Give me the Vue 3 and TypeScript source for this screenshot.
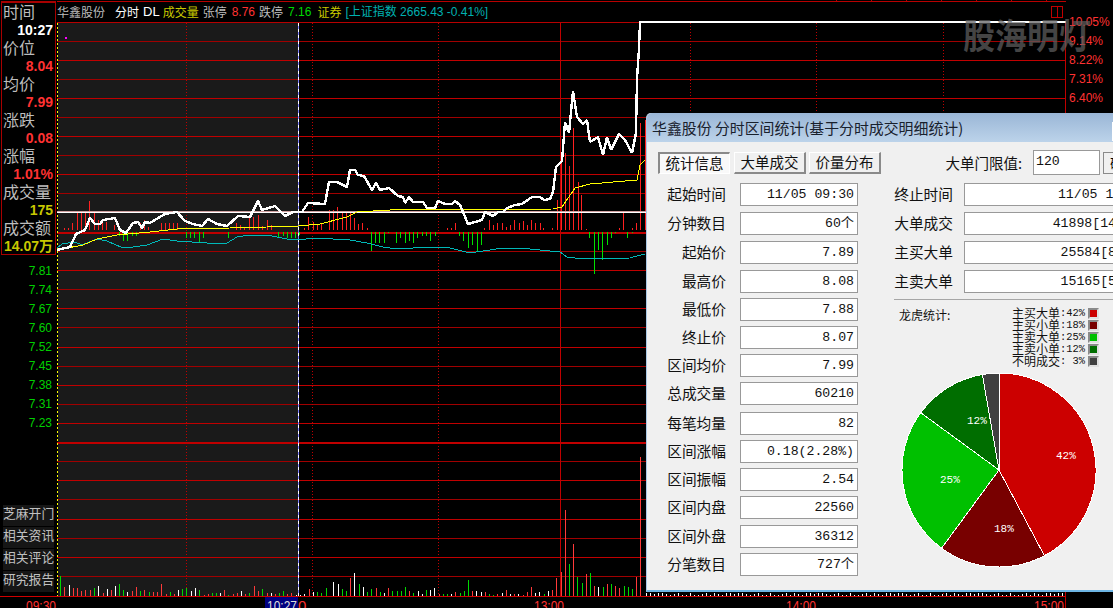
<script setup lang="ts">
type Pt = [number, number]

function parsePairs(s: string): Pt[] {
  return s.trim().split(/\s+/).map((p) => {
    const [a, b] = p.split(',').map(Number)
    return [a, b] as Pt
  })
}
function line(s: string): string {
  return parsePairs(s).map((p) => p.join(',')).join(' ')
}
function bars(s: string, base: number): string {
  return parsePairs(s).map(([x, y]) => `M${x + 0.5} ${base}V${y}`).join('')
}

const pricePts = line(`57,250 70,247 76,234 85,230 90,218 95,224 100,224 103,220 115,218 120,230 126,233 133,223 138,222 142,228 145,222 150,223 160,217 165,214 177,212 185,221 193,224 202,226 208,219 217,224 227,226 238,216 250,217 258,201 262,210 275,206 285,216 293,212 302,212 308,203 325,204 329,182 337,182 347,187 350,170 355,170 358,175 364,176 372,190 376,183 380,190 389,188 398,196 403,197 405,203 409,197 413,202 423,202 427,208 435,208 438,201 445,204 452,204 455,201 460,205 468,224 482,220 485,212 493,216 498,212 503,212 507,208 515,205 522,204 532,197 540,197 544,200 550,199 553,192 556,167 562,161 565,122 569,133 573,91 577,117 583,124 587,120 590,142 598,137 603,155 607,137 611,150 619,134 625,140 632,153 636,133 637,78 639,49 640,22 1066,22`)
const avgPts = line(`57,250 83,245 97,239 117,235 150,232 177,229 230,228 267,227 298,226 320,224 347,217 357,212 390,210 553,209 562,207 575,188 590,184 637,180 640,165 645,160`)
const idxPts = line(`57,248 62,244 75,242 82,245 97,239 107,241 123,248 133,247 147,245 163,239 177,241 207,243 227,243 237,237 250,235 267,235 287,239 298,240 315,238 333,239 350,240 367,243 383,247 397,249 430,247 450,248 470,253 483,251 503,248 530,249 560,252 567,257 583,259 630,258 637,256 645,254`)

const redUp = bars(`64,228 68,228 72,223 77,213 81,212 85,211 89,201 94,212 98,220 102,220 106,222 114,225 140,223 144,220 148,227 161,223 165,223 169,223 173,223 177,223 236,223 240,225 244,228 249,218 253,217 258,215 262,226 267,220 271,225 304,228 308,217 313,222 317,224 321,224 329,210 333,210 337,207 342,211 346,212 350,211 354,218 358,224 362,223 367,228 447,228 451,228 455,223 484,228 489,220 493,225 497,223 502,223 506,227 510,225 514,220 519,223 523,221 527,225 531,220 535,223 540,223 543,228 552,228 557,200 561,163 565,153 569,166 573,128 578,182 581,195 586,229 619,228 623,213 632,228 636,223 640,123 645,120`, 230)
const greenDown = bars(`119,236 123,241 127,241 132,236 136,236 186,238 190,238 194,238 199,243 203,238 228,238 278,238 283,236 287,238 291,238 295,238 299,235 371,251 375,243 379,243 384,243 388,233 396,243 400,238 405,243 409,241 413,243 417,238 422,236 426,236 430,241 435,236 459,236 463,241 468,248 472,245 477,251 481,245 589,238 594,274 598,250 602,260 607,245 611,238 615,233 627,238 632,233`, 232)

const volA = `181g288 193r321 208w315 220r324 232r324 244r333 256r330 270r330 283g324 295w318 308r339 320w327 334r330 346w318 358g312 370g330 382w336 395r333 409r321 421g333 433r330 446g336 460r336 472r336 484r312 497r342 511g336 523r342 535w330 547g327 559g324 574w333 586w324 598g330 611r345 623r343 637g339 649g339 661w339 673r330 685g345 699r342 711r339 724w333 736r342 748g339 762r318 775r333 787g327 800r339 812w339 825r343 838g339 850g333 862r342 874r339 888w345 900w345 913w342 926r327 938w336 952g336 964g339 977g324`
const volB = `10w306 25w312 37g327 49g333 61r294 73w279 88g312 100w321 112g336 124g327 139r324 151g336 163w339 175r324 187g333 202g333 214g333 226g321 238r333 250g339 265w333 277w342 289g330 301w330 313w324 328r342 340g342 352g342 364w342 376r336 391g339 403g333 415g300 427r333 439w333 454w336 466r336 478g342 490g345 502r342 517w339 529r330 541w342 553r342 565w342 579r345 592r336 604r321 616w339 628w336 643g342 655w333 667r330 679r294 694r276 706r90 718g252 730r192 742g291 757g309 769r282 781g279 793r318 805w321 820g321 832r312 844g312 856r318 868r324 883g318 895g321 907g327 919r291`

function volPath(color: string): string {
  let d = ''
  const add = (s: string, off: number) => {
    for (const t of s.split(' ')) {
      const m = t.match(/(\d+)([rgw])(\d+)/)
      if (m && m[2] === color) {
        const x = Math.round(off + Number(m[1]) / 3) + 0.5
        d += `M${x} 596V${480 + Math.round(Number(m[3]) / 3)}`
      }
    }
  }
  add(volA, 0)
  add(volB, 330)
  return d
}
const volRed = volPath('r') + 'M640.5 596V457'
const volGreen = volPath('g')
const volWhite = volPath('w')

const tickHeights = [3, 3, 2, 3, 3, 2, 1, 2, 3, 1, 1, 3, 1, 1, 2, 3, 1, 3, 2, 1]
const ticks = Array.from({ length: 105 }, (_, i) => {
  const x = 646 + i * 4 + 0.5
  return `M${x} 596V${596 - tickHeights[i % tickHeights.length]}`
}).join('')

const gridDim = [41, 79, 117, 155, 193, 251, 289, 327, 366, 404, 461, 499, 538, 576]
const gridBright = [60, 98, 136, 174, 270, 308, 347, 385, 423, 480, 519, 557]
const dotted = [186, 312, 438, 690, 816, 943]
const timeLabels = [
  { t: '09:30', x: 26 },
  { t: '13:00', x: 534 },
  { t: '14:00', x: 786 },
  { t: '15:00', x: 1034 },
]

const sideRows = [
  { label: '时间', value: '10:27', cls: 'white' },
  { label: '价位', value: '8.04', cls: 'red' },
  { label: '均价', value: '7.99', cls: 'red' },
  { label: '涨跌', value: '0.08', cls: 'red' },
  { label: '涨幅', value: '1.01%', cls: 'red' },
  { label: '成交量', value: '175', cls: 'yellow' },
  { label: '成交额', value: '14.07万', cls: 'yellow' },
]
const lowPrices = ['7.81', '7.74', '7.67', '7.60', '7.52', '7.45', '7.38', '7.31', '7.23']
const links = ['芝麻开门', '相关资讯', '相关评论', '研究报告']
const pcts = ['10.05%', '9.14%', '8.22%', '7.31%', '6.40%']

const leftStats = [
  { k: '起始时间', v: '11/05 09:30', gap: 0 },
  { k: '分钟数目', v: '60个', gap: 6 },
  { k: '起始价', v: '7.89', gap: 6 },
  { k: '最高价', v: '8.08', gap: 6 },
  { k: '最低价', v: '7.88', gap: 5 },
  { k: '终止价', v: '8.07', gap: 5 },
  { k: '区间均价', v: '7.99', gap: 5 },
  { k: '总成交量', v: '60210', gap: 5 },
  { k: '每笔均量', v: '82', gap: 7 },
  { k: '区间涨幅', v: '0.18(2.28%)', gap: 5 },
  { k: '区间振幅', v: '2.54', gap: 5 },
  { k: '区间内盘', v: '22560', gap: 5 },
  { k: '区间外盘', v: '36312', gap: 6 },
  { k: '分笔数目', v: '727个', gap: 5 },
]
const rightStats = [
  { k: '终止时间', v: '11/05 10:30' },
  { k: '大单成交', v: '41898[141笔]' },
  { k: '主买大单', v: '25584[87笔]' },
  { k: '主卖大单', v: '15165[54笔]' },
]
const legend = [
  { k: '主买大单', v: ':42%', c: '#cc0000' },
  { k: '主买小单', v: ':18%', c: '#780000' },
  { k: '主卖大单', v: ':25%', c: '#00c000' },
  { k: '主卖小单', v: ':12%', c: '#006e00' },
  { k: '不明成交', v: ': 3%', c: '#404040' },
]

const R = 97
const slices = [
  { from: 0, to: 152.1, c: '#cc0000' },
  { from: 152.1, to: 216.3, c: '#780000' },
  { from: 216.3, to: 306.2, c: '#00c000' },
  { from: 306.2, to: 350.1, c: '#006e00' },
  { from: 350.1, to: 360, c: '#404040' },
].map((s) => {
  const p = (a: number) => {
    const r = (a * Math.PI) / 180
    return `${(100 + R * Math.sin(r)).toFixed(2)} ${(100 - R * Math.cos(r)).toFixed(2)}`
  }
  const large = s.to - s.from > 180 ? 1 : 0
  return { d: `M100 100L${p(s.from)}A${R} ${R} 0 ${large} 1 ${p(s.to)}Z`, c: s.c }
})
const pieLabels = [
  { t: '42%', x: 157, y: 89 },
  { t: '18%', x: 95, y: 162 },
  { t: '25%', x: 41, y: 113 },
  { t: '12%', x: 68, y: 54 },
]
</script>

<template>
  <div class="screen">
    <aside class="side">
      <div class="side-box">
        <template v-for="r in sideRows" :key="r.label">
          <div class="side-label">{{ r.label }}</div>
          <div class="side-value" :class="r.cls">{{ r.value }}</div>
        </template>
      </div>
      <div class="low-prices">
        <div v-for="p in lowPrices" :key="p" class="low-price">{{ p }}</div>
      </div>
      <div class="links">
        <div v-for="l in links" :key="l" class="link">{{ l }}</div>
      </div>
      <div class="side-rule"></div>
    </aside>

    <main class="chart-col">
      <div class="top-ticks"></div>
      <header class="head">
        <span class="h-name">华鑫股份</span>
        <span class="h-white">分时</span>
        <span class="h-dl">DL</span>
        <span class="h-yellow">成交量</span>
        <span class="h-gray">张停</span>
        <span class="h-red">8.76</span>
        <span class="h-gray">跌停</span>
        <span class="h-green">7.16</span>
        <span class="h-yellow h-sec">证券</span>
        <span class="h-cyan">[上证指数 2665.43 -0.41%]</span>
        <span class="h-box"></span>
      </header>
      <svg class="chart" width="1010" height="586" viewBox="57 22 1010 586">
        <rect x="58" y="23" width="240" height="573" fill="#1a1a1a" />
        <g shape-rendering="crispEdges">
          <path v-for="y in gridDim" :key="y" :d="`M57 ${y + 0.5}H1066`" stroke="#a00000" fill="none" />
          <path v-for="y in gridBright" :key="y" :d="`M57 ${y + 0.5}H1066`" stroke="#c00000" fill="none" />
          <path d="M57 443H1066" stroke="#c00000" stroke-width="2" fill="none" />
          <path d="M57 233H1066" stroke="#c00000" stroke-width="2" fill="none" />
          <path d="M57 22.5H1066" stroke="#b80000" fill="none" />
          <path d="M57 596.5H1066" stroke="#d00000" fill="none" />
          <path v-for="x in dotted" :key="x" :d="`M${x + 0.5} 23V596`" stroke="#c00000" stroke-dasharray="1 2" fill="none" />
          <path d="M560.5 23V596M1065.5 22V608" stroke="#c00000" fill="none" />
          <path d="M57.5 23V596" stroke="#ffff00" stroke-dasharray="2 2" fill="none" />
          <path d="M298.5 23V596" stroke="#ffffff" fill="none" stroke-dasharray="3 3" />
          <path d="M298.5 26V596" stroke="#7d7dff" fill="none" stroke-dasharray="3 3" />
          <rect x="65" y="37" width="2" height="2" fill="#ff00ff" />
          <path :d="redUp" stroke="#ff2020" fill="none" />
          <path :d="greenDown" stroke="#00e000" fill="none" />
          <path :d="volRed" stroke="#ff3a3a" fill="none" />
          <path :d="volGreen" stroke="#00d800" fill="none" />
          <path :d="volWhite" stroke="#ffffff" fill="none" />
          <path :d="ticks" stroke="#ffffff" fill="none" />
          <path d="M57 212H1066" stroke="#d0a0a0" stroke-width="2" fill="none" />
          <path d="M57 212.5H1066" stroke="#ffffff" stroke-width="1" fill="none" />
          <polyline :points="idxPts" fill="none" stroke="#00b8b8" stroke-width="1" />
          <polyline :points="avgPts" fill="none" stroke="#ffff00" stroke-width="1" />
          <polyline :points="pricePts" fill="none" stroke="#ffffff" stroke-width="2.4" stroke-linejoin="bevel" />
        </g>
        <g class="time-labels">
          <text x="298" y="611">0</text>
          <rect x="265" y="597" width="33" height="11" fill="#000080" />
          <text v-for="l in timeLabels" :key="l.t" :x="l.x" y="611" textLength="30" lengthAdjust="spacingAndGlyphs">{{ l.t }}</text>
          <text x="267" y="611" class="cur" textLength="30" lengthAdjust="spacingAndGlyphs">10:27</text>
        </g>
      </svg>
    </main>

    <aside class="pct-col">
      <div v-for="p in pcts" :key="p" class="pct">{{ p }}</div>
    </aside>

    <div class="watermark">股海明灯</div>

    <section class="dialog">
      <div class="title">华鑫股份 分时区间统计(基于分时成交明细统计)</div>
      <div class="close"></div>
      <div class="toolbar">
        <button class="tab pressed">统计信息</button>
        <button class="tab">大单成交</button>
        <button class="tab">价量分布</button>
        <span class="limit-label">大单门限值:</span>
        <span class="limit-input">120</span>
        <button class="limit-btn">确定</button>
      </div>
      <div class="columns">
        <div class="col-left">
          <div v-for="s in leftStats" :key="s.k" class="row" :style="{ marginTop: s.gap + 'px' }">
            <span class="row-label">{{ s.k }}</span>
            <span class="row-value">{{ s.v }}</span>
          </div>
        </div>
        <div class="col-right">
          <div v-for="s in rightStats" :key="s.k" class="row r-row">
            <span class="row-label r-label">{{ s.k }}</span>
            <span class="row-value r-value">{{ s.v }}</span>
          </div>
          <div class="divider"></div>
          <div class="pie-panel">
            <div class="pie-head">
              <span class="pie-title">龙虎统计:</span>
              <div class="legend">
                <div v-for="l in legend" :key="l.k" class="legend-row">
                  <span class="legend-k">{{ l.k }}</span>
                  <span class="legend-v">{{ l.v }}</span>
                  <i class="swatch" :style="{ background: l.c }"></i>
                </div>
              </div>
            </div>
            <svg class="pie" width="200" height="200" viewBox="0 0 200 200">
              <path v-for="s in slices" :key="s.c" :d="s.d" :fill="s.c" stroke="#ffffff" stroke-width="1" shape-rendering="crispEdges" />
              <text v-for="t in pieLabels" :key="t.t" :x="t.x" :y="t.y" class="pie-text">{{ t.t }}</text>
            </svg>
          </div>
        </div>
      </div>
    </section>
  </div>
</template>

<style>
html, body { margin: 0; background: #000; }
</style>

<style scoped>
.screen {
  position: relative;
  display: flex;
  width: 1113px;
  height: 608px;
  overflow: hidden;
  background: #000;
  font-family: "Noto Sans CJK SC", "Liberation Sans", sans-serif;
}
.side {
  width: 57px;
  flex: none;
  display: flex;
  flex-direction: column;
  box-sizing: border-box;
  padding-top: 1px;
}
.side-box {
  margin-left: 1px;
  width: 55px;
  height: 254px;
  box-sizing: border-box;
  border: 1px solid #a80000;
  border-top-width: 2px;
}
.side-label {
  height: 18px;
  line-height: 16px;
  padding-left: 1px;
  font-size: 16px;
  color: #bdbdbd;
  white-space: nowrap;
}
.side-value {
  height: 18px;
  line-height: 18px;
  padding-right: 2px;
  text-align: right;
  font: bold 14px/18px "Liberation Sans", "Noto Sans CJK SC", sans-serif;
  white-space: nowrap;
}
.white { color: #fff; }
.red { color: #ff3232; }
.yellow { color: #c8c800; }
.low-prices { margin-top: 7px; }
.low-price {
  height: 19px;
  line-height: 19px;
  text-align: right;
  padding-right: 5px;
  font: 12px/19px "Liberation Sans", sans-serif;
  color: #00d000;
}
.links {
  margin-top: auto;
  margin-left: 3px;
  width: 51px;
  display: flex;
  flex-direction: column;
  gap: 1px;
}
.link {
  height: 21px;
  line-height: 16px;
  background: #161616;
  color: #c0c0c0;
  font-size: 12.8px;
  white-space: nowrap;
}
.side-rule {
  height: 1px;
  margin-top: 4px;
  margin-bottom: 11px;
  background: #d00000;
}
.chart-col {
  width: 1009px;
  flex: none;
  display: flex;
  flex-direction: column;
}
.top-ticks {
  height: 1px;
  flex: none;
  margin-left: 779px;
  background: repeating-linear-gradient(to right, #b00000 0 1px, transparent 1px 35px);
}
.head {
  height: 21px;
  flex: none;
  border-top: 1px solid #b80000;
  box-sizing: border-box;
  display: flex;
  align-items: center;
  font-size: 12px;
  white-space: nowrap;
  color: #bdbdbd;
}
.head span { line-height: 20px; }
.h-name { color: #bdbdbd; }
.h-white { color: #fff; margin-left: 10px; }
.h-dl { color: #fff; margin-left: 4px; font: 13px "Liberation Sans", sans-serif; }
.h-yellow { color: #c8c800; margin-left: 3px; }
.h-gray { margin-left: 4px; }
.h-red { color: #ff3232; margin-left: 5px; font: 12px "Liberation Sans", sans-serif; }
.h-green { color: #00d800; margin-left: 5px; font: 12px "Liberation Sans", sans-serif; }
.h-sec { margin-left: 6px; }
.h-cyan { color: #00b0b0; margin-left: 4px; font: 12px "Liberation Sans", "Noto Sans CJK SC", sans-serif; }
.head .h-box {
  margin-left: auto;
  margin-right: 3px;
  width: 10px;
  height: 10px;
  border: 1px solid #c00000;
  background: linear-gradient(#c00000, #c00000) center / 1px 100% no-repeat;
  flex: none;
}
.chart { display: block; flex: none; overflow: visible; }
.time-labels text {
  font: 15px "Liberation Sans", sans-serif;
  fill: #ff3232;
}
.time-labels .cur { fill: #dcdcdc; }
.pct-col {
  flex: 1;
  padding-top: 13px;
}
.pct {
  height: 19px;
  line-height: 19px;
  padding-left: 3px;
  font: 12px/19px "Liberation Sans", sans-serif;
  color: #ff3232;
}
.watermark {
  position: absolute;
  left: 963px;
  top: 11px;
  font-size: 32px;
  line-height: 46px;
  font-weight: 700;
  color: rgba(95, 95, 95, 0.72);
  white-space: nowrap;
  transform: scaleY(1.1);
}
.dialog {
  position: absolute;
  left: 646px;
  top: 113px;
  width: 520px;
  height: 479px;
  box-sizing: border-box;
  background: #f0f0f0;
  border-left: 1px solid #a9c8e6;
  border-bottom: 2px solid #6db5e4;
  border-top-left-radius: 5px;
  color: #111;
}
.title {
  height: 29px;
  line-height: 29px;
  padding-left: 5px;
  font-size: 14.9px;
  color: #18202c;
  white-space: nowrap;
  background: linear-gradient(#9ab6d6, #bcd3ea);
  border-top-left-radius: 5px;
}
.close {
  position: absolute;
  left: 465px;
  top: 9px;
  width: 40px;
  height: 17px;
  background: #c85050;
  border: 1px solid #fff;
}
.toolbar {
  display: flex;
  align-items: center;
  height: 25px;
  margin-top: 8px;
  padding-left: 11px;
}
.tab {
  width: 72px;
  height: 22px;
  margin-right: 3px;
  padding: 0;
  box-sizing: border-box;
  background: #f0f0f0;
  border: 1px solid #8a8a8a;
  border-top-color: #fff;
  border-left-color: #fff;
  border-right-width: 2px;
  border-bottom-width: 2px;
  font: 14.5px/18px "Noto Sans CJK SC", sans-serif;
  color: #111;
  white-space: nowrap;
}
.tab.pressed {
  background: #f9f9f9;
  border: 1px solid #fff;
  border-top-color: #8a8a8a;
  border-left-color: #8a8a8a;
  border-top-width: 2px;
  border-left-width: 2px;
  margin-right: 4px;
}
.limit-label {
  margin-left: 55px;
  font-size: 14.5px;
  white-space: nowrap;
  width: 83px;
  text-align: right;
}
.limit-input {
  margin-left: 11px;
  width: 67px;
  height: 25px;
  box-sizing: border-box;
  flex: none;
  background: #fff;
  border: 1px solid #999;
  padding-left: 2px;
  font: 13.2px/21px "Liberation Mono", monospace;
}
.limit-btn {
  margin-left: 3px;
  width: 40px;
  height: 22px;
  flex: none;
  padding: 0;
  background: #f0f0f0;
  border: 1px solid #8a8a8a;
  font: 13px "Noto Sans CJK SC", sans-serif;
}
.columns {
  display: flex;
  margin-top: 8px;
}
.col-left { width: 211px; flex: none; }
.col-right { width: 270px; margin-left: 36px; flex: none; }
.row {
  display: flex;
  align-items: center;
  height: 23px;
}
.row-label {
  width: 79px;
  margin-right: 14px;
  padding-bottom: 3px;
  text-align: right;
  font-size: 14.7px;
  white-space: nowrap;
  flex: none;
}
.row-value {
  width: 118px;
  height: 23px;
  box-sizing: border-box;
  flex: none;
  background: #fff;
  border: 1px solid #999;
  padding-right: 3px;
  text-align: right;
  font: 13.2px/21px "Liberation Mono", "Noto Sans CJK SC", monospace;
  white-space: pre;
}
.r-row { margin-bottom: 6px; }
.r-label { width: 59px; margin-right: 11px; margin-left: 0; }
.r-value { width: 185px; }
.divider {
  height: 1px;
  margin-top: 2px;
  background: #a6a6a6;
}
.pie-panel { width: 205px; padding-top: 7px; }
.pie-head {
  display: flex;
  justify-content: space-between;
  height: 60px;
  padding-left: 5px;
}
.pie-title { font-size: 12px; line-height: 15px; white-space: nowrap; }
.legend { display: flex; flex-direction: column; }
.legend-row {
  display: flex;
  align-items: center;
  height: 12px;
  justify-content: flex-end;
}
.legend-k { font-size: 12px; line-height: 12px; white-space: nowrap; }
.legend-v {
  font: 10.4px/12px "Liberation Mono", monospace;
  white-space: pre;
  margin-right: 3px;
}
.swatch {
  display: block;
  width: 11px;
  height: 11px;
  box-sizing: border-box;
  border: 2px solid #8a8a8a;
  border-right-color: #e0e0e0;
  border-bottom-color: #e0e0e0;
}
.pie {
  display: block;
  margin-left: 5px;
  margin-top: 3px;
}
.pie-text {
  font: 11px "Liberation Mono", monospace;
  fill: #fff;
}
</style>
